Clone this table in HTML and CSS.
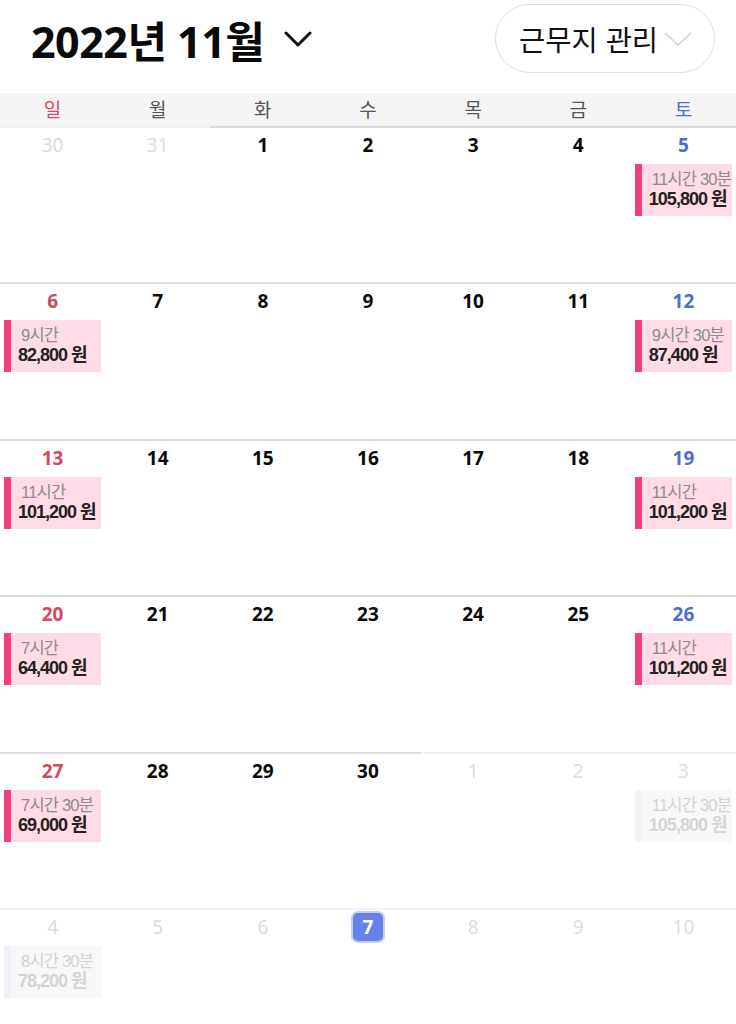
FILE: index.html
```html
<!DOCTYPE html>
<html lang="ko">
<head>
<meta charset="utf-8">
<link rel="stylesheet" href="styles.css">
</head>
<body>
<header class="top">
  <div class="title">2022년 11월
    <svg class="title-chev" width="28" height="18" viewBox="0 0 28 18"><path d="M2 3 L14 15 L26 3" fill="none" stroke="#111" stroke-width="3" stroke-linecap="round" stroke-linejoin="round"/></svg>
  </div>
  <button class="place">근무지 관리<svg class="place-chev" width="30" height="18" viewBox="0 0 30 18"><path d="M2 3 L15 15 L28 3" fill="none" stroke="#cfcfcf" stroke-width="1.6"/></svg></button>
</header>
<div class="weekdays">
  <div class="wd sun">일</div><div class="wd">월</div><div class="wd">화</div><div class="wd">수</div><div class="wd">목</div><div class="wd">금</div><div class="wd sat">토</div>
</div>
<div class="month">
  <div class="cell other"><span class="num">30</span></div>
  <div class="cell other"><span class="num">31</span></div>
  <div class="cell"><span class="num">1</span></div>
  <div class="cell"><span class="num">2</span></div>
  <div class="cell"><span class="num">3</span></div>
  <div class="cell"><span class="num">4</span></div>
  <div class="cell sat"><span class="num">5</span><div class="ev"><span class="h">11시간 30분</span><span class="w">105,800 원</span></div></div>

  <div class="cell sun"><span class="num">6</span><div class="ev"><span class="h">9시간</span><span class="w">82,800 원</span></div></div>
  <div class="cell"><span class="num">7</span></div>
  <div class="cell"><span class="num">8</span></div>
  <div class="cell"><span class="num">9</span></div>
  <div class="cell"><span class="num">10</span></div>
  <div class="cell"><span class="num">11</span></div>
  <div class="cell sat"><span class="num">12</span><div class="ev"><span class="h">9시간 30분</span><span class="w">87,400 원</span></div></div>

  <div class="cell sun"><span class="num">13</span><div class="ev"><span class="h">11시간</span><span class="w">101,200 원</span></div></div>
  <div class="cell"><span class="num">14</span></div>
  <div class="cell"><span class="num">15</span></div>
  <div class="cell"><span class="num">16</span></div>
  <div class="cell"><span class="num">17</span></div>
  <div class="cell"><span class="num">18</span></div>
  <div class="cell sat"><span class="num">19</span><div class="ev"><span class="h">11시간</span><span class="w">101,200 원</span></div></div>

  <div class="cell sun"><span class="num">20</span><div class="ev"><span class="h">7시간</span><span class="w">64,400 원</span></div></div>
  <div class="cell"><span class="num">21</span></div>
  <div class="cell"><span class="num">22</span></div>
  <div class="cell"><span class="num">23</span></div>
  <div class="cell"><span class="num">24</span></div>
  <div class="cell"><span class="num">25</span></div>
  <div class="cell sat"><span class="num">26</span><div class="ev"><span class="h">11시간</span><span class="w">101,200 원</span></div></div>

  <div class="cell sun"><span class="num">27</span><div class="ev"><span class="h">7시간 30분</span><span class="w">69,000 원</span></div></div>
  <div class="cell"><span class="num">28</span></div>
  <div class="cell"><span class="num">29</span></div>
  <div class="cell"><span class="num">30</span></div>
  <div class="cell other"><span class="num">1</span></div>
  <div class="cell other"><span class="num">2</span></div>
  <div class="cell other"><span class="num">3</span><div class="ev"><span class="h">11시간 30분</span><span class="w">105,800 원</span></div></div>

  <div class="cell other"><span class="num">4</span><div class="ev"><span class="h">8시간 30분</span><span class="w">78,200 원</span></div></div>
  <div class="cell other"><span class="num">5</span></div>
  <div class="cell other"><span class="num">6</span></div>
  <div class="cell other today"><span class="num">7</span></div>
  <div class="cell other"><span class="num">8</span></div>
  <div class="cell other"><span class="num">9</span></div>
  <div class="cell other"><span class="num">10</span></div>
</div>
</body>
</html>
```
FILE: styles.css
```css
* { box-sizing: border-box; }
html, body { margin: 0; padding: 0; background: #fff; }
body {
  width: 736px;
  height: 1024px;
  overflow: hidden;
  font-family: "Noto Sans", "Noto Sans CJK KR", sans-serif;
  color: #111;
}
.top {
  height: 93px;
  display: flex;
  align-items: center;
  justify-content: space-between;
  padding: 0 21px 0 31px;
}
.title {
  font-family: "Noto Sans", "Noto Sans CJK KR", sans-serif;
  font-size: 43px;
  font-weight: 700;
  letter-spacing: -0.5px;
  display: flex;
  align-items: center;
  margin-top: -15px;
  color: #0a0a0a;
}
.title-chev { margin-left: 20px; margin-top: 0px; }
.place {
  height: 69px;
  width: 220px;
  border: 1.5px solid #dedede;
  border-radius: 35px;
  background: #fff;
  display: flex;
  align-items: center;
  justify-content: flex-start;
  padding: 0 0 0 23px;
  font-family: "Noto Sans CJK KR", sans-serif;
  font-size: 28.5px;
  font-weight: 400;
  color: #111;
  margin-top: -16px;
}
.place-chev { margin-left: 5px; margin-top: 0px; flex: none; }
.weekdays {
  display: grid;
  grid-template-columns: repeat(7, 1fr);
  height: 33px;
  background: #f5f5f5;
}
.wd {
  display: flex;
  align-items: center;
  justify-content: center;
  font-family: "Noto Sans CJK KR", sans-serif;
  font-size: 19px;
  color: #555;
  padding-bottom: 2px;
}
.wd.sun { color: #d9485e; }
.wd.sat { color: #4a6ed8; }
.month {
  display: grid;
  grid-template-columns: repeat(7, 1fr);
  grid-auto-rows: 156.4px;
}
.cell {
  border-top: 2px solid #dcdcdc;
  display: flex;
  flex-direction: column;
  align-items: center;
  padding-top: 4px;
}
.cell.other { border-top-color: #f2f2f2; }
.num {
  font-family: "Noto Sans", sans-serif;
  font-size: 19px;
  font-weight: 700;
  line-height: 26px;
  height: 26px;
  color: #0a0a0a;
}
.cell.sun .num { color: #d6485c; }
.cell.sat .num { color: #4d6dd6; }
.cell.other .num { color: #dcdcdc; font-weight: 400; }
.cell.today .num {
  background: #6682ea;
  color: #fff;
  font-weight: 700;
  width: 34px;
  height: 32px;
  line-height: 28px;
  text-align: center;
  border-radius: 7px;
  border: 2px solid #c6cff2;
  margin-top: -3px;
}
.ev {
  align-self: stretch;
  margin: 6px 4px 0 4px;
  height: 52px;
  background: #ffdbe5;
  border-left: 7px solid #f43f78;
  padding: 6px 0 0 10px;
  display: flex;
  flex-direction: column;
  overflow: hidden;
  white-space: nowrap;
}
.ev .h {
  font-family: "Liberation Sans", "Noto Sans CJK KR", sans-serif;
  font-size: 16.5px;
  font-weight: 400;
  color: #8c8c8c;
  letter-spacing: -0.8px;
  line-height: 19px;
}
.ev .w {
  font-family: "Liberation Sans", "Noto Sans CJK KR", sans-serif;
  font-size: 18px;
  font-weight: 700;
  color: #222;
  letter-spacing: -1px;
  line-height: 21px;
  margin-left: -3px;
}
.cell.other .ev { background: #f8f8fb; border-left-color: #f0f2f8; }
.cell.other .ev .h { color: #d2d2d2; }
.cell.other .ev .w { color: #d4d4d4; }
```
